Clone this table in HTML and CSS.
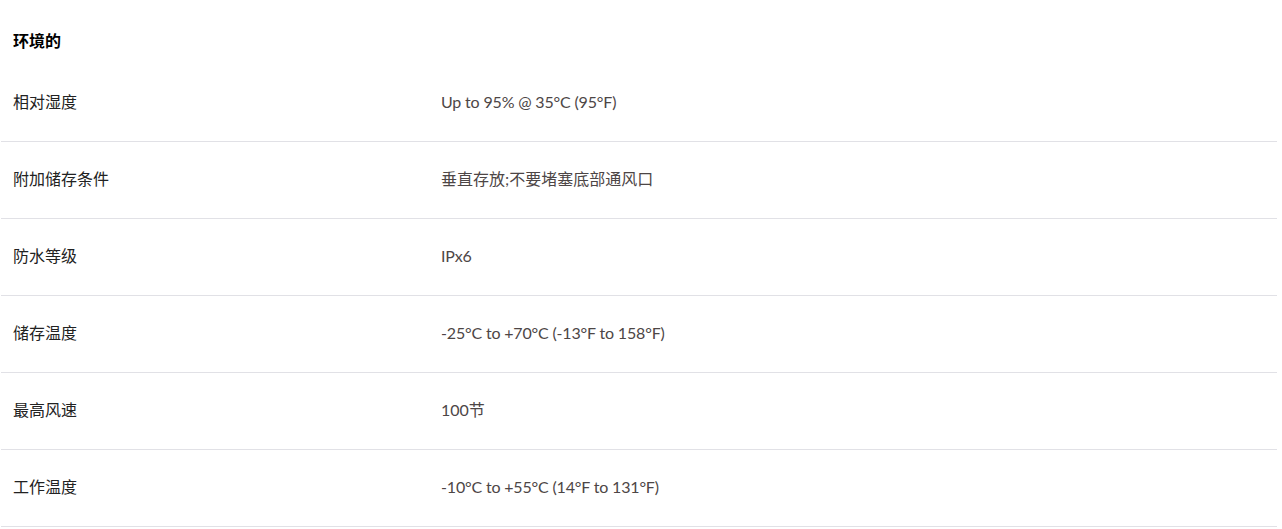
FILE: index.html
```html
<!DOCTYPE html>
<html lang="zh-CN">
<head>
<meta charset="utf-8">
<title>环境的</title>
<link rel="stylesheet" href="styles.css">
</head>
<body>
<section class="specs">
  <h3 class="specs-title">环境的</h3>
  <div class="spec-row"><div class="spec-label">相对湿度</div><div class="spec-value latin">Up to 95% @ 35°C (95°F)</div></div>
  <div class="spec-row"><div class="spec-label">附加储存条件</div><div class="spec-value">垂直存放;不要堵塞底部通风口</div></div>
  <div class="spec-row"><div class="spec-label">防水等级</div><div class="spec-value latin">IPx6</div></div>
  <div class="spec-row"><div class="spec-label">储存温度</div><div class="spec-value latin">-25°C to +70°C (-13°F to 158°F)</div></div>
  <div class="spec-row"><div class="spec-label">最高风速</div><div class="spec-value">100节</div></div>
  <div class="spec-row"><div class="spec-label">工作温度</div><div class="spec-value latin">-10°C to +55°C (14°F to 131°F)</div></div>
</section>
</body>
</html>
```
FILE: styles.css
```css
html, body {
  margin: 0;
  padding: 0;
  background: #fff;
}
body {
  font-family: "Lato", "Noto Sans CJK SC", sans-serif;
  font-size: 16px;
  color: #333;
}
.specs {
  width: 1276px;
  margin-left: 1px;
}
.specs-title {
  margin: 0;
  padding: 31px 12px 0;
  height: 65px;
  box-sizing: border-box;
  line-height: 20px;
  font-size: 16px;
  font-weight: 700;
  color: #000;
}
.spec-row {
  display: grid;
  grid-template-columns: 428px 1fr;
  height: 77px;
  padding-bottom: 4px;
  align-items: center;
  border-bottom: 1px solid #e1e1e6;
  box-sizing: border-box;
}
.spec-label {
  padding: 0 12px;
  color: #222;
}
.spec-value {
  padding: 0 12px;
  color: #4d4646;
}
.latin {
  letter-spacing: -0.17px;
}
```
